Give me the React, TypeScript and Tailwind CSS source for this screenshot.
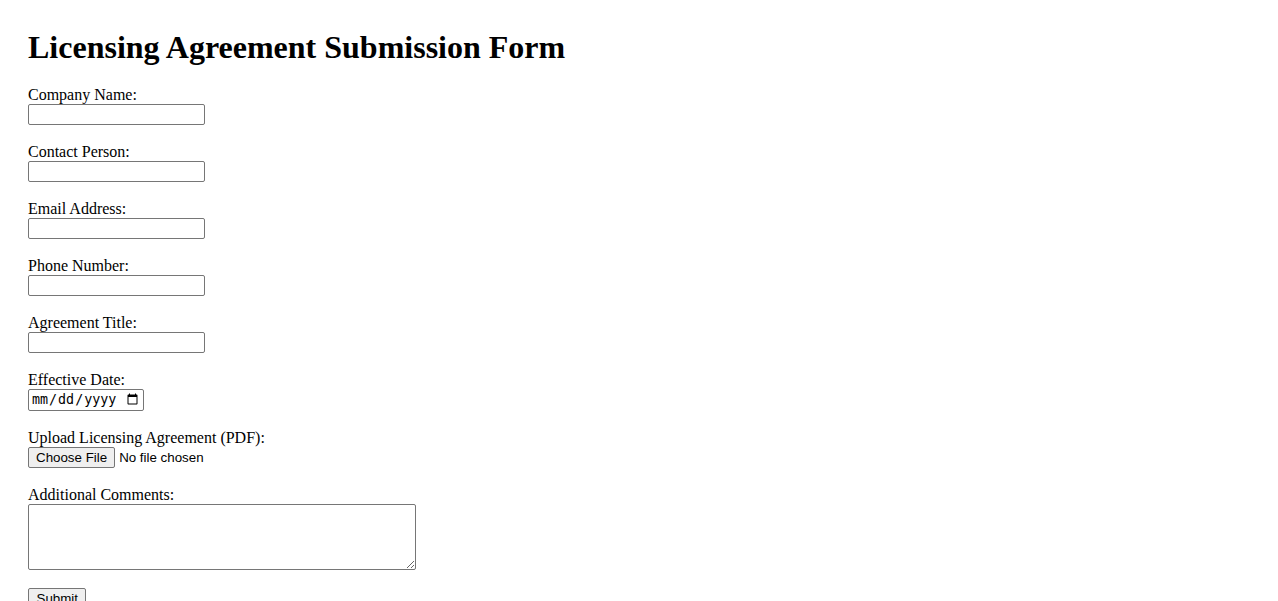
export default function App() {
  const fields = [
    "Company Name:",
    "Contact Person:",
    "Email Address:",
    "Phone Number:",
    "Agreement Title:",
  ];

  return (
    <main className="min-h-screen bg-white pt-[29px] pl-[28px] text-black font-['Liberation_Serif',serif]">
      <h1 className="text-[32px] font-bold leading-[37px] mb-[20px]">
        Licensing Agreement Submission Form
      </h1>

      <form className="flex flex-col items-start text-[16px] leading-[18px]">
        {fields.map((label) => (
          <div key={label} className="flex flex-col items-start mb-[18px]">
            <label>{label}</label>
            <input
              type="text"
              className="w-[177px] h-[21px] border border-[#767676] rounded-[2px] bg-white px-[2px] text-[13.333px] font-['Liberation_Sans',sans-serif]"
            />
          </div>
        ))}

        {/* Date */}
        <div className="flex flex-col items-start mb-[18px]">
          <label>Effective Date:</label>
          <input
            type="date"
            className="w-[116px] h-[22px] border border-[#767676] rounded-[2px] bg-white px-[2px] text-[13.333px] font-['DejaVu_Sans_Mono',monospace]"
          />
        </div>

        {/* File upload */}
        <div className="flex flex-col items-start mb-[18px]">
          <label>Upload Licensing Agreement (PDF):</label>
          <input
            type="file"
            accept="application/pdf"
            className="h-[21px] text-[13.333px] leading-[15px] font-['Liberation_Sans',sans-serif] file:h-[21px] file:border file:border-[#767676] file:rounded-[2px] file:bg-[#efefef] file:px-[7px] file:mr-[4px] file:text-black"
          />
        </div>

        {/* Comments */}
        <div className="flex flex-col items-start mb-[18px]">
          <label>Additional Comments:</label>
          <textarea className="w-[388px] h-[66px] border border-[#767676] rounded-[2px] bg-white px-[2px] text-[13.333px] font-['Liberation_Mono',monospace]" />
        </div>

        <button
          type="submit"
          className="h-[21px] border border-[#767676] rounded-[2px] bg-[#efefef] px-[7.5px] text-[13.333px] leading-[15px] font-['Liberation_Sans',sans-serif]"
        >
          Submit
        </button>
      </form>
    </main>
  );
}
